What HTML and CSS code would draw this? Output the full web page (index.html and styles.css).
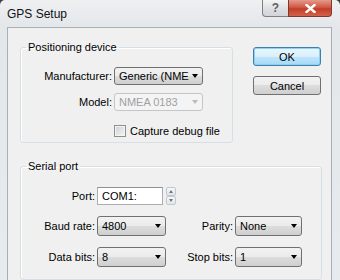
FILE: index.html
```html
<!DOCTYPE html>
<html lang="en">
<head>
  <meta charset="UTF-8" />
  <title>GPS Setup</title>
  <link rel="stylesheet" href="styles.css">
</head>
<body>
  <div class="window">
    <div class="titlebar">
      <span class="title">GPS Setup</span>
      <div class="caption-btns">
        <div class="cap help">?</div>
        <div class="cap close">
          <svg width="11" height="9" viewBox="0 0 11 9"><path d="M1.5 1 L9.5 8 M9.5 1 L1.5 8" stroke="#fff" stroke-width="2.4" stroke-linecap="square"/></svg>
        </div>
      </div>
    </div>

    <div class="client">
      <div class="top-row">
        <fieldset class="group device">
          <legend>Positioning device</legend>
          <div class="device-grid">
            <label class="lbl">Manufacturer:</label>
            <div class="combo"><span class="combo-text">Generic (NMEA 0183)</span><span class="arrow"></span></div>
            <label class="lbl">Model:</label>
            <div class="combo disabled"><span class="combo-text">NMEA 0183</span><span class="arrow"></span></div>
            <span></span>
            <label class="check"><span class="box"></span>Capture debug file</label>
          </div>
        </fieldset>
        <div class="actions">
          <button class="btn default">OK</button>
          <button class="btn">Cancel</button>
        </div>
      </div>

      <fieldset class="group serial">
        <legend>Serial port</legend>
        <div class="serial-grid">
          <label class="lbl">Port:</label>
          <div class="port">
            <div class="textbox">COM1:</div>
            <div class="spin">
              <div class="spin-btn"><span class="up"></span></div>
              <div class="spin-btn"><span class="down"></span></div>
            </div>
          </div>
          <span></span>

          <label class="lbl">Baud rate:</label>
          <div class="combo tall"><span class="combo-text">4800</span><span class="arrow"></span></div>
          <label class="lbl">Parity:</label>
          <div class="combo tall"><span class="combo-text">None</span><span class="arrow"></span></div>

          <label class="lbl">Data bits:</label>
          <div class="combo tall"><span class="combo-text">8</span><span class="arrow"></span></div>
          <label class="lbl">Stop bits:</label>
          <div class="combo tall"><span class="combo-text">1</span><span class="arrow"></span></div>
        </div>
      </fieldset>
    </div>
  </div>
</body>
</html>
```

FILE: styles.css
```css
* { box-sizing: border-box; }
body {
  margin: 0;
  background: #3b3b3b;
  font-family: "Liberation Sans", Arial, sans-serif;
  font-size: 11px;
  color: #000;
}
.window {
  width: 340px;
  height: 280px;
  overflow: hidden;
  display: flex;
  flex-direction: column;
  border-radius: 5px 5px 0 0;
  background: linear-gradient(#eef0f2, #e4e7ea 27px, #e8ebee);
}

/* title bar */
.titlebar { height: 27px; flex: none; display: flex; align-items: flex-start; padding-left: 7px; }
.title { font-size: 12px; line-height: 28px; color: #111; }
.caption-btns { margin-left: auto; margin-right: 8px; display: flex; }
.cap {
  height: 17px;
  display: flex;
  align-items: center;
  justify-content: center;
  border: 1px solid #7d7f82;
  border-top: none;
}
.help {
  width: 26px;
  border-right: none;
  border-radius: 0 0 0 4px;
  background: linear-gradient(#f4f4f4, #dcdde0 60%, #d2d4d8);
  color: #5d6168;
  font-size: 12px;
  font-weight: bold;
}
.close {
  width: 44px;
  border-color: #7a3a32;
  border-radius: 0 0 4px 0;
  background: linear-gradient(#e59a8c, #d05a45 45%, #c43c27 55%, #d2634b);
}

/* client area */
.client {
  flex: 1;
  margin: 0 8px 0 7px;
  border: 1px solid #a9afb6;
  border-bottom: none;
  background: #f0f0f0;
  padding: 13px 10px 0 12px;
}
.top-row { display: flex; align-items: flex-start; }

.group {
  margin: 0;
  padding: 0;
  border: 1px solid #d5dfe5;
  border-radius: 3px;
  box-shadow: inset 1px 1px 0 #fff;
}
.group legend {
  margin-left: 5px;
  padding: 0 2px;
  line-height: 13px;
}
.device { width: 213px; padding-bottom: 9px; }
.serial { width: 302px; margin-top: 17px; height: 120px; }

.lbl { align-self: center; text-align: right; white-space: nowrap; }

.device-grid {
  display: grid;
  grid-template-columns: 91px 89px;
  grid-template-rows: 18px 18px 14px;
  column-gap: 2px;
  row-gap: 8px;
  margin-top: 13px;
}
.check { display: flex; align-items: center; gap: 4px; margin-top: 10px; white-space: nowrap; }
.box {
  flex: none;
  width: 12px;
  height: 12px;
  border: 1px solid #8e8f8f;
  background: linear-gradient(135deg, #cbcfd5, #f6f6f6);
  box-shadow: inset 0 0 0 1px #f4f4f4;
}

/* combo boxes */
.combo {
  position: relative;
  height: 18px;
  border: 1px solid #707070;
  border-radius: 3px;
  background: linear-gradient(#f2f2f2, #ebebeb 50%, #dddddd 50%, #cfcfcf);
  display: flex;
  align-items: center;
  padding-left: 4px;
}
.combo.tall { height: 20px; }
.combo-text { flex: 1; overflow: hidden; white-space: nowrap; margin-right: 13px; }
.arrow {
  position: absolute;
  right: 4px;
  top: 50%;
  margin-top: -2px;
  border-left: 3.5px solid transparent;
  border-right: 3.5px solid transparent;
  border-top: 4px solid #000;
}
.combo.disabled {
  border-color: #c2c6c9;
  background: #f4f4f4;
  color: #a0a0a0;
}
.combo.disabled .arrow { border-top-color: #b9bcbf; }

/* buttons */
.actions {
  margin-left: auto;
  margin-top: 6px;
  width: 68px;
  display: flex;
  flex-direction: column;
  gap: 10px;
}
.btn {
  height: 19px;
  padding: 0;
  font-family: inherit;
  font-size: 11px;
  color: #000;
  border: 1px solid #707070;
  border-radius: 3px;
  background: linear-gradient(#f2f2f2, #ebebeb 50%, #dddddd 50%, #cfcfcf);
}
.btn.default {
  border-color: #3c7fb1;
  background: linear-gradient(#eaf6fd, #d9f0fc 50%, #bee6fd 50%, #a7d9f5);
  box-shadow: inset 0 0 0 1px #90d0f0;
}

/* serial port */
.serial-grid {
  display: grid;
  grid-template-columns: 74px 69px 65px 67px;
  grid-template-rows: 18px 20px 20px;
  column-gap: 2px;
  row-gap: 11px;
  margin-top: 14px;
}
.port { display: flex; gap: 3px; grid-column: span 2; }
.textbox {
  width: 66px;
  height: 18px;
  border: 1px solid #abadb3;
  border-top-color: #8e9297;
  background: #fff;
  padding-left: 4px;
  line-height: 16px;
}
.spin { display: flex; flex-direction: column; width: 10px; height: 18px; }
.spin-btn {
  flex: 1;
  border: 1px solid #c3c8cf;
  border-radius: 2px;
  background: linear-gradient(#f5f7f9, #e2e6ea);
  display: flex;
  align-items: center;
  justify-content: center;
}
.up, .down { border-left: 2.5px solid transparent; border-right: 2.5px solid transparent; }
.up { border-bottom: 3px solid #6d7884; }
.down { border-top: 3px solid #6d7884; }
```
